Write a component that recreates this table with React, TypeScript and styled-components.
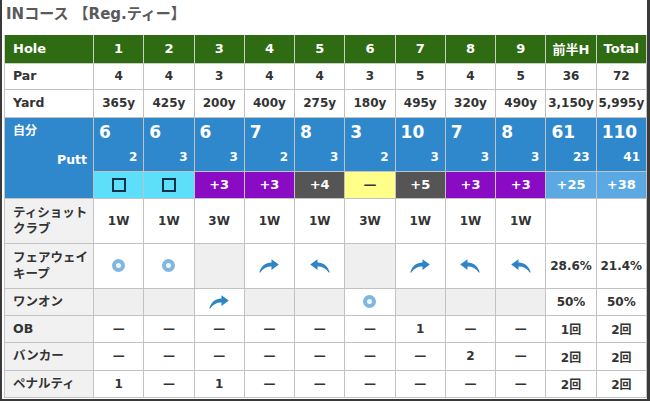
import React from 'react'
import styled, { createGlobalStyle, css } from 'styled-components'

const GlobalStyle = createGlobalStyle`
  html, body {
    margin: 0;
    padding: 0;
    background: #fff;
  }
  body {
    font-family: "DejaVu Sans", "Noto Sans CJK JP", sans-serif;
    color: #333;
  }
`

type Tone = 'birdie' | 'bogey' | 'double' | 'par' | 'triple' | 'total'

type Mark = 'ring' | 'right' | 'left' | 'none'

interface IHole {
  no: string
  par: string
  yard: string
  score: string
  putt: string
  status: string
  tone: Tone
  club: string
  fairway: Mark
  oneOn: Mark
  ob: string
  bunker: string
  penalty: string
}

const holes: IHole[] = [
  { no: '1', par: '4', yard: '365y', score: '6', putt: '2', status: 'sq', tone: 'birdie', club: '1W', fairway: 'ring', oneOn: 'none', ob: '—', bunker: '—', penalty: '1' },
  { no: '2', par: '4', yard: '425y', score: '6', putt: '3', status: 'sq', tone: 'birdie', club: '1W', fairway: 'ring', oneOn: 'none', ob: '—', bunker: '—', penalty: '—' },
  { no: '3', par: '3', yard: '200y', score: '6', putt: '3', status: '+3', tone: 'triple', club: '3W', fairway: 'none', oneOn: 'right', ob: '—', bunker: '—', penalty: '1' },
  { no: '4', par: '4', yard: '400y', score: '7', putt: '2', status: '+3', tone: 'triple', club: '1W', fairway: 'right', oneOn: 'none', ob: '—', bunker: '—', penalty: '—' },
  { no: '5', par: '4', yard: '275y', score: '8', putt: '3', status: '+4', tone: 'double', club: '1W', fairway: 'left', oneOn: 'none', ob: '—', bunker: '—', penalty: '—' },
  { no: '6', par: '3', yard: '180y', score: '3', putt: '2', status: '—', tone: 'par', club: '3W', fairway: 'none', oneOn: 'ring', ob: '—', bunker: '—', penalty: '—' },
  { no: '7', par: '5', yard: '495y', score: '10', putt: '3', status: '+5', tone: 'double', club: '1W', fairway: 'right', oneOn: 'none', ob: '1', bunker: '—', penalty: '—' },
  { no: '8', par: '4', yard: '320y', score: '7', putt: '3', status: '+3', tone: 'triple', club: '1W', fairway: 'left', oneOn: 'none', ob: '—', bunker: '2', penalty: '—' },
  { no: '9', par: '5', yard: '490y', score: '8', putt: '3', status: '+3', tone: 'triple', club: '1W', fairway: 'left', oneOn: 'none', ob: '—', bunker: '—', penalty: '—' },
]

const totals = [
  { no: '前半H', par: '36', yard: '3,150y', score: '61', putt: '23', status: '+25', fairway: '28.6%', oneOn: '50%', ob: '1回', bunker: '2回', penalty: '2回' },
  { no: 'Total', par: '72', yard: '5,995y', score: '110', putt: '41', status: '+38', fairway: '21.4%', oneOn: '50%', ob: '2回', bunker: '2回', penalty: '2回' },
]

const toneColors: Record<Tone, { bg: string; fg: string }> = {
  birdie: { bg: '#5ddffa', fg: '#0b3350' },
  par: { bg: '#ffff8a', fg: '#333' },
  triple: { bg: '#8a0bc4', fg: '#fff' },
  double: { bg: '#555555', fg: '#fff' },
  bogey: { bg: '#555555', fg: '#fff' },
  total: { bg: '#5aa9e2', fg: '#fff' },
}

const ArrowIcon = ({ flip }: { flip?: boolean }) => (
  <svg width="20" height="14" viewBox="0 0 20 14" style={{ transform: flip ? 'scaleX(-1)' : undefined }}>
    <path
      d="M12.5 0.3 L19.8 5.6 L12.5 11 L12.5 7.6 C8 7.4 4.4 9.2 1.2 13.6 C0.6 13.9 0.2 13.6 0.4 13 C2.2 7 6.4 3.8 12.5 3.5 Z"
      fill="#2d85c6"
    />
  </svg>
)

export default function App() {
  const renderMark = (mark: Mark) => {
    if (mark === 'ring') return <Ring />
    if (mark === 'right') return <ArrowIcon />
    if (mark === 'left') return <ArrowIcon flip />
    return null
  }

  return (
    <>
      <GlobalStyle />
      <Page>
        <Title>INコース 【Reg.ティー】</Title>
        <Table>
          <colgroup>
            <col style={{ width: 89 }} />
            {Array.from({ length: 11 }).map((_, i) => (
              <col key={i} />
            ))}
          </colgroup>
          <thead>
            <Row $h={28}>
              <HeadCell $left>Hole</HeadCell>
              {holes.map((h) => (
                <HeadCell key={h.no}>{h.no}</HeadCell>
              ))}
              {totals.map((t) => (
                <HeadCell key={t.no}>{t.no}</HeadCell>
              ))}
            </Row>
          </thead>
          <tbody>
            <Row $h={26}>
              <LabelCell $white>Par</LabelCell>
              {holes.map((h) => (
                <Cell key={h.no}>{h.par}</Cell>
              ))}
              {totals.map((t) => (
                <Cell key={t.no}>{t.par}</Cell>
              ))}
            </Row>
            <Row $h={28}>
              <LabelCell $white>Yard</LabelCell>
              {holes.map((h) => (
                <Cell key={h.no}>{h.yard}</Cell>
              ))}
              {totals.map((t) => (
                <Cell key={t.no}>{t.yard}</Cell>
              ))}
            </Row>
            <Row $h={54}>
              <SelfLabel rowSpan={2}>
                <SelfName>自分</SelfName>
                <PuttName>Putt</PuttName>
              </SelfLabel>
              {holes.map((h) => (
                <ScoreCell key={h.no}>
                  <Strokes>{h.score}</Strokes>
                  <Putts>{h.putt}</Putts>
                </ScoreCell>
              ))}
              {totals.map((t) => (
                <ScoreCell key={t.no}>
                  <Strokes>{t.score}</Strokes>
                  <Putts>{t.putt}</Putts>
                </ScoreCell>
              ))}
            </Row>
            <Row $h={27}>
              {holes.map((h) => (
                <StatusCell key={h.no} $tone={h.tone}>
                  {h.status === 'sq' ? <Square /> : h.status}
                </StatusCell>
              ))}
              {totals.map((t) => (
                <StatusCell key={t.no} $tone="total">
                  {t.status}
                </StatusCell>
              ))}
            </Row>
            <Row $h={45}>
              <LabelCell>
                ティショット
                <br />
                クラブ
              </LabelCell>
              {holes.map((h) => (
                <Cell key={h.no}>{h.club}</Cell>
              ))}
              <Cell />
              <Cell />
            </Row>
            <Row $h={45}>
              <LabelCell>
                フェアウェイ
                <br />
                キープ
              </LabelCell>
              {holes.map((h) => (
                <Cell key={h.no} $muted={h.fairway === 'none'}>
                  <IconBox>{renderMark(h.fairway)}</IconBox>
                </Cell>
              ))}
              {totals.map((t) => (
                <Cell key={t.no}>{t.fairway}</Cell>
              ))}
            </Row>
            <Row $h={27}>
              <LabelCell>ワンオン</LabelCell>
              {holes.map((h) => (
                <Cell key={h.no} $muted={h.oneOn === 'none'}>
                  <IconBox>{renderMark(h.oneOn)}</IconBox>
                </Cell>
              ))}
              {totals.map((t) => (
                <Cell key={t.no}>{t.oneOn}</Cell>
              ))}
            </Row>
            <Row $h={27}>
              <LabelCell>OB</LabelCell>
              {holes.map((h) => (
                <Cell key={h.no}>{h.ob}</Cell>
              ))}
              {totals.map((t) => (
                <Cell key={t.no}>{t.ob}</Cell>
              ))}
            </Row>
            <Row $h={28}>
              <LabelCell>バンカー</LabelCell>
              {holes.map((h) => (
                <Cell key={h.no}>{h.bunker}</Cell>
              ))}
              {totals.map((t) => (
                <Cell key={t.no}>{t.bunker}</Cell>
              ))}
            </Row>
            <Row $h={27}>
              <LabelCell>ペナルティ</LabelCell>
              {holes.map((h) => (
                <Cell key={h.no}>{h.penalty}</Cell>
              ))}
              {totals.map((t) => (
                <Cell key={t.no}>{t.penalty}</Cell>
              ))}
            </Row>
          </tbody>
        </Table>
      </Page>
    </>
  )
}

const Page = styled.div`
  width: 650px;
  height: 401px;
  box-sizing: border-box;
  padding: 0 0 0 2px;
  border-left: 2px solid #3a3a3a;
  border-right: 3px solid #3a3a3a;
  border-bottom: 2px solid #3a3a3a;
  overflow: hidden;
`

const Title = styled.div`
  height: 35px;
  line-height: 28px;
  padding-left: 2px;
  font-size: 15px;
  font-weight: bold;
  color: #5a5a5a;
`

const Table = styled.table`
  width: 643px;
  table-layout: fixed;
  border-collapse: collapse;
  font-size: 12px;
  font-weight: bold;
`

const Row = styled.tr<{ $h: number }>`
  height: ${(p) => p.$h}px;
`

const cellBase = css`
  border: 1px solid #c2c2c2;
  padding: 0;
  text-align: center;
  vertical-align: middle;
`

const HeadCell = styled.th<{ $left?: boolean }>`
  ${cellBase};
  background: #2e6b12;
  color: #fff;
  font-size: 13px;
  border-color: #c8d0c4;
  border-top: none;
  text-align: ${(p) => (p.$left ? 'left' : 'center')};
  padding-left: ${(p) => (p.$left ? '8px' : '0')};
`

const LabelCell = styled.td<{ $white?: boolean }>`
  ${cellBase};
  text-align: left;
  padding-left: 8px;
  background: ${(p) => (p.$white ? '#fff' : '#f1f1f1')};
  color: #333;
  font-size: 12.5px;
  line-height: 16px;
`

const Cell = styled.td<{ $muted?: boolean }>`
  ${cellBase};
  background: ${(p) => (p.$muted ? '#efefef' : '#fff')};
  color: #333;
`

const IconBox = styled.div`
  display: flex;
  align-items: center;
  justify-content: center;
`

const Ring = styled.span`
  display: block;
  width: 13px;
  height: 13px;
  box-sizing: border-box;
  border-radius: 50%;
  border: 4px solid #7fb6e2;
  background: #eef6fc;
`

const SelfLabel = styled.td`
  ${cellBase};
  background: #2f88cc;
  color: #fff;
  vertical-align: top;
  text-align: left;
  padding: 5px 6px 0 8px;
`

const SelfName = styled.div`
  font-size: 12px;
  line-height: 16px;
`

const PuttName = styled.div`
  font-size: 12.5px;
  text-align: right;
  margin-top: 13px;
`

const ScoreCell = styled.td`
  ${cellBase};
  background: #2f88cc;
  color: #fff;
  vertical-align: top;
  text-align: left;
  padding: 2px 6px 0 5px;
`

const Strokes = styled.div`
  font-size: 17px;
  line-height: 24px;
`

const Putts = styled.div`
  font-size: 12px;
  line-height: 16px;
  text-align: right;
  margin-top: 5px;
`

const StatusCell = styled.td<{ $tone: Tone }>`
  ${cellBase};
  background: ${(p) => toneColors[p.$tone].bg};
  color: ${(p) => toneColors[p.$tone].fg};
  font-size: 13px;
`

const Square = styled.span`
  display: inline-block;
  vertical-align: middle;
  width: 14px;
  height: 14px;
  box-sizing: border-box;
  border: 2px solid #0b3350;
`
